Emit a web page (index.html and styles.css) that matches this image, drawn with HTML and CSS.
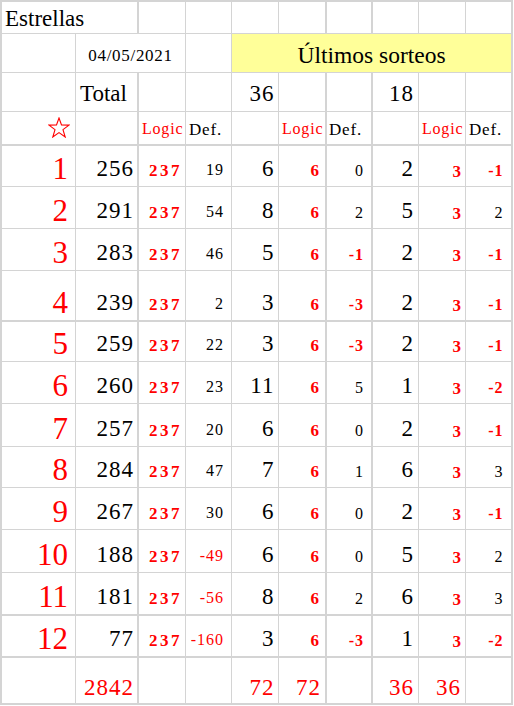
FILE: index.html
```html
<!DOCTYPE html>
<html lang="es">
<head>
<meta charset="utf-8">
<title>Estrellas</title>
<link rel="stylesheet" href="styles.css">
</head>
<body>
<div class="sheet">
  <div class="row h32">
    <div class="c tk sp2 est">Estrellas</div>
    <div class="c"></div><div class="c"></div><div class="c"></div>
    <div class="c tk"></div><div class="c tk"></div><div class="c"></div><div class="c"></div><div class="c tk"></div>
  </div>
  <div class="row h39">
    <div class="c"></div>
    <div class="c sp2 date">04/05/2021</div>
    <div class="c"></div>
    <div class="c tk sp6 hl">Últimos sorteos</div>
  </div>
  <div class="row h39">
    <div class="c"></div>
    <div class="c tk total">Total</div>
    <div class="c"></div><div class="c"></div>
    <div class="c a5">36</div>
    <div class="c tk"></div><div class="c tk"></div>
    <div class="c a8">18</div>
    <div class="c"></div><div class="c tk"></div>
  </div>
  <div class="row h34 rb2">
    <div class="c star"><svg width="22" height="21" viewBox="0 0 22 21"><polygon points="11,1 13.5,8 21,8.1 15,12.6 17.2,20 11,15.6 4.8,20 7,12.6 1,8.1 8.5,8" fill="none" stroke="#ff0000" stroke-width="1.1" stroke-linejoin="miter"/></svg></div>
    <div class="c tk"></div>
    <div class="c lbl">Logic</div>
    <div class="c def">Def.</div>
    <div class="c"></div>
    <div class="c tk lbl">Logic</div>
    <div class="c tk def d7">Def.</div>
    <div class="c"></div>
    <div class="c lbl">Logic</div>
    <div class="c tk def">Def.</div>
  </div>

  <div class="row h41">
    <div class="c a1">1</div><div class="c tk a2">256</div><div class="c a3">237</div><div class="c a4">19</div><div class="c a5">6</div><div class="c tk a6">6</div><div class="c tk a7">0</div><div class="c a8">2</div><div class="c a9">3</div><div class="c tk a10 nb">-1</div>
  </div>
  <div class="row h42">
    <div class="c a1">2</div><div class="c tk a2">291</div><div class="c a3">237</div><div class="c a4">54</div><div class="c a5">8</div><div class="c tk a6">6</div><div class="c tk a7">2</div><div class="c a8">5</div><div class="c a9">3</div><div class="c tk a10">2</div>
  </div>
  <div class="row h42">
    <div class="c a1">3</div><div class="c tk a2">283</div><div class="c a3">237</div><div class="c a4">46</div><div class="c a5">5</div><div class="c tk a6">6</div><div class="c tk a7 nb">-1</div><div class="c a8">2</div><div class="c a9">3</div><div class="c tk a10 nb">-1</div>
  </div>
  <div class="row h51 rb2">
    <div class="c a1">4</div><div class="c tk a2">239</div><div class="c a3">237</div><div class="c a4">2</div><div class="c a5">3</div><div class="c tk a6">6</div><div class="c tk a7 nb">-3</div><div class="c a8">2</div><div class="c a9">3</div><div class="c tk a10 nb">-1</div>
  </div>
  <div class="row h40">
    <div class="c a1">5</div><div class="c tk a2">259</div><div class="c a3">237</div><div class="c a4">22</div><div class="c a5">3</div><div class="c tk a6">6</div><div class="c tk a7 nb">-3</div><div class="c a8">2</div><div class="c a9">3</div><div class="c tk a10 nb">-1</div>
  </div>
  <div class="row h42">
    <div class="c a1">6</div><div class="c tk a2">260</div><div class="c a3">237</div><div class="c a4">23</div><div class="c a5">11</div><div class="c tk a6">6</div><div class="c tk a7">5</div><div class="c a8">1</div><div class="c a9">3</div><div class="c tk a10 nb">-2</div>
  </div>
  <div class="row h43">
    <div class="c a1">7</div><div class="c tk a2">257</div><div class="c a3">237</div><div class="c a4">20</div><div class="c a5">6</div><div class="c tk a6">6</div><div class="c tk a7">0</div><div class="c a8">2</div><div class="c a9">3</div><div class="c tk a10 nb">-1</div>
  </div>
  <div class="row h41">
    <div class="c a1">8</div><div class="c tk a2">284</div><div class="c a3">237</div><div class="c a4">47</div><div class="c a5">7</div><div class="c tk a6">6</div><div class="c tk a7">1</div><div class="c a8">6</div><div class="c a9">3</div><div class="c tk a10">3</div>
  </div>
  <div class="row h42">
    <div class="c a1">9</div><div class="c tk a2">267</div><div class="c a3">237</div><div class="c a4">30</div><div class="c a5">6</div><div class="c tk a6">6</div><div class="c tk a7">0</div><div class="c a8">2</div><div class="c a9">3</div><div class="c tk a10 nb">-1</div>
  </div>
  <div class="row h43">
    <div class="c a1">10</div><div class="c tk a2">188</div><div class="c a3">237</div><div class="c a4 neg">-49</div><div class="c a5">6</div><div class="c tk a6">6</div><div class="c tk a7">0</div><div class="c a8">5</div><div class="c a9">3</div><div class="c tk a10">2</div>
  </div>
  <div class="row h43 rb2">
    <div class="c a1">11</div><div class="c tk a2">181</div><div class="c a3">237</div><div class="c a4 neg">-56</div><div class="c a5">8</div><div class="c tk a6">6</div><div class="c tk a7">2</div><div class="c a8">6</div><div class="c a9">3</div><div class="c tk a10">3</div>
  </div>
  <div class="row h42 rb2">
    <div class="c a1">12</div><div class="c tk a2">77</div><div class="c a3">237</div><div class="c a4 neg">-160</div><div class="c a5">3</div><div class="c tk a6">6</div><div class="c tk a7 nb">-3</div><div class="c a8">1</div><div class="c a9">3</div><div class="c tk a10 nb">-2</div>
  </div>
  <div class="row h47 rb2 sum">
    <div class="c"></div><div class="c tk a2">2842</div><div class="c"></div><div class="c"></div><div class="c a5">72</div><div class="c tk s6">72</div><div class="c tk"></div><div class="c a8">36</div><div class="c s9">36</div><div class="c tk"></div>
  </div>
</div>
</body>
</html>
```
FILE: styles.css
```css
html, body {
  margin: 0;
  padding: 0;
  background: #ffffff;
}
body, .sheet, .c {
  font-family: "Liberation Serif", Tinos, "Times New Roman", Times, "DejaVu Serif", serif;
}
body {
  color: #000000;
}
.sheet {
  width: 513px;
  box-sizing: border-box;
  border-top: 2px solid #d4d4d4;
  border-left: 2px solid #d4d4d4;
}
.row {
  display: grid;
  grid-template-columns: 74px 63px 47px 46px 47px 48px 46px 46px 47px 47px;
  box-sizing: border-box;
  border-bottom: 1px solid #d4d4d4;
}
.row.rb2 { border-bottom-width: 2px; }
.h32 { height: 32px; }
.h34 { height: 34px; }
.h39 { height: 39px; }
.h40 { height: 40px; }
.h41 { height: 41px; }
.h42 { height: 42px; }
.h43 { height: 43px; }
.h47 { height: 47px; }
.h51 { height: 51px; }

.c {
  display: flex;
  align-items: flex-end;
  justify-content: flex-end;
  overflow: hidden;
  white-space: nowrap;
  line-height: 1;
  min-width: 0;
  box-sizing: border-box;
  border-right: 1px solid #d4d4d4;
}
.tk { border-right-width: 2px; }
.sp2 { grid-column: span 2; }
.sp6 { grid-column: span 6; }

/* header */
.est {
  justify-content: flex-start;
  font-size: 23px;
  padding: 0 0 3.3px 3px;
}
.date {
  justify-content: center;
  font-size: 17px;
  letter-spacing: 0.7px;
  padding-bottom: 8.2px;
}
.hl {
  background: #ffff99;
  justify-content: center;
  font-size: 23.5px;
  padding-bottom: 4.9px;
}
.total {
  justify-content: flex-start;
  font-size: 23px;
  padding: 0 0 5.6px 4px;
}
.star {
  padding: 0 5px 6.5px 0;
}
.star svg { display: block; }
.lbl {
  justify-content: flex-start;
  color: #ff0000;
  font-size: 16px;
  letter-spacing: 0.8px;
  padding: 0 0 7.2px 3px;
}
.def {
  justify-content: flex-start;
  font-size: 17px;
  letter-spacing: 0.8px;
  padding: 0 0 6.4px 3px;
}
.def.d7 { padding-left: 2px; }

/* data columns */
.a1 {
  color: #ff0000;
  font-size: 31px;
  padding: 0 7px 2px 0;
}
.a2 {
  font-size: 23px;
  letter-spacing: 1px;
  padding: 0 3px 5.6px 0;
}
.a3 {
  color: #ff0000;
  font-weight: bold;
  font-size: 17px;
  letter-spacing: 2.5px;
  padding: 0 3px 7.5px 0;
}
.a4 {
  font-size: 16px;
  letter-spacing: 1px;
  padding: 0 7px 7.7px 0;
}
.a5 {
  font-size: 23px;
  letter-spacing: 1px;
  padding: 0 3.5px 5.6px 0;
}
.a6 {
  color: #ff0000;
  font-weight: bold;
  font-size: 17px;
  padding: 0 6px 7.2px 0;
}
.a7 {
  font-size: 16px;
  letter-spacing: 1px;
  padding: 0 7px 7.4px 0;
}
.a8 {
  font-size: 23px;
  letter-spacing: 1px;
  padding: 0 4px 5.6px 0;
}
.a9 {
  color: #ff0000;
  font-weight: bold;
  font-size: 17px;
  padding: 0 4px 6.5px 0;
}
.a10 {
  font-size: 16px;
  letter-spacing: 1px;
  padding: 0 7.5px 7.4px 0;
}
.neg { color: #ff0000; }
.nb { color: #ff0000; font-weight: bold; }

/* totals row */
.sum .c { color: #ff0000; padding-bottom: 4.3px; }
.s6 {
  font-size: 23px;
  letter-spacing: 1px;
  padding-right: 4px;
}
.s9 {
  font-size: 23px;
  letter-spacing: 1px;
  padding-right: 4px;
}
```
